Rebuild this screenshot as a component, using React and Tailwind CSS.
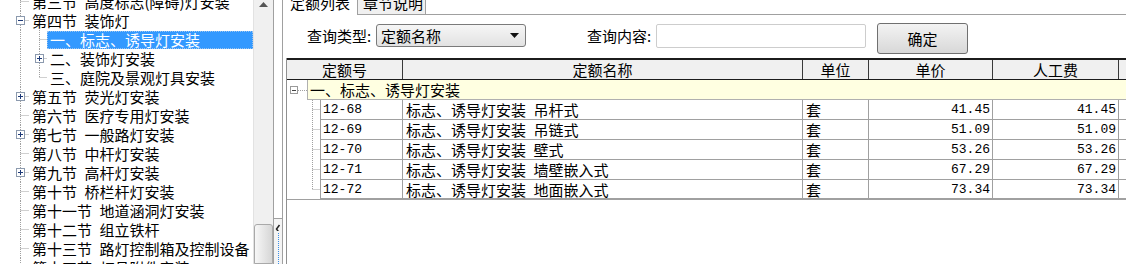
import React from 'react';

const CJK = "font-['Noto_Sans_CJK_SC',sans-serif]";
const MONO = "font-['Liberation_Mono','Noto_Sans_CJK_SC',monospace]";

const TREE = [
  { t: '第三节\u2002高度标志(障碍)灯安装', lv: 0, k: 'leaf' },
  { t: '第四节\u2002装饰灯', lv: 0, k: 'minus' },
  { t: '一、标志、诱导灯安装', lv: 1, k: 'leaf', sel: true },
  { t: '二、装饰灯安装', lv: 1, k: 'plus' },
  { t: '三、庭院及景观灯具安装', lv: 1, k: 'leaf', last: true },
  { t: '第五节\u2002荧光灯安装', lv: 0, k: 'plus' },
  { t: '第六节\u2002医疗专用灯安装', lv: 0, k: 'leaf' },
  { t: '第七节\u2002一般路灯安装', lv: 0, k: 'plus' },
  { t: '第八节\u2002中杆灯安装', lv: 0, k: 'leaf' },
  { t: '第九节\u2002高杆灯安装', lv: 0, k: 'plus' },
  { t: '第十节\u2002桥栏杆灯安装', lv: 0, k: 'leaf' },
  { t: '第十一节\u2002地道涵洞灯安装', lv: 0, k: 'leaf' },
  { t: '第十二节\u2002组立铁杆', lv: 0, k: 'leaf' },
  { t: '第十三节\u2002路灯控制箱及控制设备', lv: 0, k: 'leaf' },
  { t: '第十四节\u2002灯具附件安装', lv: 0, k: 'leaf' },
];

const ROWS = [
  { code: '12-68', name: '标志、诱导灯安装\u2002吊杆式', price: '41.45' },
  { code: '12-69', name: '标志、诱导灯安装\u2002吊链式', price: '51.09' },
  { code: '12-70', name: '标志、诱导灯安装\u2002壁式', price: '53.26' },
  { code: '12-71', name: '标志、诱导灯安装\u2002墙壁嵌入式', price: '67.29' },
  { code: '12-72', name: '标志、诱导灯安装\u2002地面嵌入式', price: '73.34' },
];

const DOT = { stroke: '#a0a0a0', strokeWidth: 1, strokeDasharray: '1 1' };

// small +/- box of the tree
const ExpandBox = ({ x, y, size = 8, minus }) => (
  <g>
    <rect x={x + 0.5} y={y + 0.5} width={size} height={size} fill="#fff" stroke="#8c9aae" />
    <rect x={x + 2} y={y + size / 2} width={size - 3} height={1} fill="#1e3a78" />
    {!minus && <rect x={x + size / 2} y={y + 2} width={1} height={size - 3} fill="#1e3a78" />}
  </g>
);

const Connector = ({ lv, k, last }) => {
  const w = lv === 0 ? 29 : 47;
  const cx = lv === 0 ? 20.5 : 39.5;
  return (
    <svg width={w} height="19" className="shrink-0">
      <line x1="20.5" y1="0" x2="20.5" y2="19" {...DOT} />
      {lv === 1 && <line x1="39.5" y1="0" x2="39.5" y2={last ? 9.5 : 19} {...DOT} />}
      <line x1={cx} y1="9.5" x2={w} y2="9.5" {...DOT} />
      {k !== 'leaf' && <ExpandBox x={cx - 4.5} y={5} minus={k === 'minus'} />}
    </svg>
  );
};

const TreeRow = ({ item }) => (
  <div className="flex h-[19px] items-center">
    <Connector lv={item.lv} k={item.k} last={item.last} />
    <div
      className={
        item.sel
          ? 'flex h-[18px] flex-1 items-center border border-dotted border-[#9cc4ee] bg-[#3399ff] pl-[2px] text-white'
          : 'flex h-[18px] flex-1 items-center pl-[3px] text-black'
      }
    >
      <span className="whitespace-nowrap leading-[18px]">{item.t}</span>
    </div>
  </div>
);

const Scrollbar = () => (
  <div className="flex h-full w-[20px] shrink-0 flex-col border-l border-[#e2e2e2] bg-[#f0f0f0]">
    <div className="flex h-[10px] items-start justify-center pt-[2px]">
      <svg width="9" height="5">
        <polygon points="4.5,0 9,5 0,5" fill="#555" />
      </svg>
    </div>
    <div className="flex-1" />
    <div className="h-[40px] rounded-t-[3px] border border-[#a9a9a9] bg-linear-to-r from-[#f7f7f7] to-[#d6d6d6]" />
  </div>
);

const Splitter = () => (
  <div className="flex h-full w-[10px] shrink-0 flex-col justify-end border-x border-[#a0a0a0] bg-white">
    <div className="flex h-[46px] flex-col items-center border-t border-[#a0a0a0] bg-[#f4f4f4]">
      <svg width="6" height="12" className="mt-[4px]">
        <polyline points="4.5,2 1.5,6 4.5,10" fill="none" stroke="#222" strokeWidth="1.5" />
      </svg>
      <div className="mt-[2px] h-full border-l border-dotted border-[#3a8ee6]" />
    </div>
  </div>
);

const HeadCell = ({ w, children }) => (
  <div className={`${w} flex shrink-0 items-center justify-center border-r border-[#3a3a3a]`}>{children}</div>
);

const Table = () => (
  <div className="ml-[3px] mt-[4px] flex flex-1 flex-col border-l border-[#909090]">
    {/* header */}
    <div className="flex h-[22px] border-y border-t-2 border-[#1c1c1c] bg-[#f0f0f0] leading-[19px]">
      <HeadCell w="w-[116px]">定额号</HeadCell>
      <HeadCell w="w-[400px]">定额名称</HeadCell>
      <HeadCell w="w-[66px]">单位</HeadCell>
      <HeadCell w="w-[124px]">单价</HeadCell>
      <HeadCell w="w-[126px]">人工费</HeadCell>
      <div className="flex-1" />
    </div>

    {/* group row */}
    <div className="flex h-[20px]">
      <svg width="20" height="20" className="shrink-0">
        <rect x="3.5" y="6.5" width="7" height="7" fill="#fff" stroke="#9a9a9a" />
        <rect x="5" y="10" width="4" height="1" fill="#444" />
        <line x1="11" y1="10.5" x2="20" y2="10.5" {...DOT} />
      </svg>
      <div className="flex flex-1 items-center border-b border-l border-[#b0b0b0] bg-[#ffffe1] pl-[2px] leading-[19px]">
        一、标志、诱导灯安装
      </div>
    </div>

    {/* data rows */}
    {ROWS.map((r, i) => {
      const last = i === ROWS.length - 1;
      return (
        <div key={r.code} className={last ? 'flex h-[20px] border-b border-[#a0a0a0]' : 'flex h-[20px]'}>
          <svg width="33" height={last ? 19 : 20} className="shrink-0">
            <line x1="25.5" y1="0" x2="25.5" y2={last ? 9.5 : 20} {...DOT} />
            <line x1="25.5" y1="9.5" x2="33" y2="9.5" {...DOT} />
          </svg>
          <div className="flex flex-1 border-b border-[#a0a0a0] leading-[19px]">
            <div className={`${MONO} flex w-[83px] shrink-0 items-center border-x border-[#a0a0a0] pl-[2px] text-[13px]`}>
              {r.code}
            </div>
            <div className="flex w-[400px] shrink-0 items-center border-r border-[#a0a0a0] pl-[3px]">{r.name}</div>
            <div className="flex w-[66px] shrink-0 items-center border-r border-[#a0a0a0] pl-[3px]">套</div>
            <div className={`${MONO} flex w-[124px] shrink-0 items-center justify-end border-r border-[#a0a0a0] pr-[2px] text-[13px]`}>
              {r.price}
            </div>
            <div className={`${MONO} flex w-[126px] shrink-0 items-center justify-end border-r border-[#a0a0a0] pr-[2px] text-[13px]`}>
              {r.price}
            </div>
            <div className="flex-1" />
          </div>
        </div>
      );
    })}
    <div className="flex-1" />
  </div>
);

export default function App() {
  return (
    <div className={`${CJK} flex h-[264px] w-[1126px] overflow-hidden bg-white text-[15px] text-black`}>
      {/* chapter tree */}
      <div className="h-full w-[253px] shrink-0 overflow-hidden">
        <div className="-mt-[8px]">
          {TREE.map((item) => (
            <TreeRow key={item.t} item={item} />
          ))}
        </div>
      </div>
      <Scrollbar />
      <Splitter />

      {/* quota list */}
      <div className="flex h-full min-w-0 flex-1 flex-col">
        <div className="flex h-[15px] shrink-0">
          <div className="w-[74px] shrink-0 pl-[7px]">
            <span className="block -translate-y-[5px] leading-[15px]">定额列表</span>
          </div>
          <div className="w-[69px] shrink-0 border border-t-0 border-[#a0a0a0] bg-[#f0f0f0] pl-[5px]">
            <span className="block -translate-y-[5px] leading-[15px]">章节说明</span>
          </div>
          <div className="flex-1 border-b border-[#a0a0a0]" />
        </div>

        <div className="mt-[8px] flex h-[31px] shrink-0 items-start pl-[24px]">
          <div className="mt-[1px] h-[24px] w-[69px] shrink-0 leading-[24px]">查询类型:</div>
          <div className="mt-[1px] flex h-[23px] w-[150px] shrink-0 items-center justify-between rounded-[3px] border border-[#7a7a7a] bg-linear-to-b from-[#f6f6f6] to-[#e2e2e2] pl-[4px] pr-[6px]">
            <span className="leading-[20px]">定额名称</span>
            <svg width="9" height="5">
              <polygon points="0,0 9,0 4.5,5" fill="#111" />
            </svg>
          </div>
          <div className="ml-[61px] mt-[1px] h-[24px] w-[69px] shrink-0 leading-[24px]">查询内容:</div>
          <div className="mt-[1px] h-[24px] w-[210px] shrink-0 rounded-[2px] border border-[#cdcdcd] bg-white" />
          <button className="ml-[11px] flex h-[31px] w-[91px] shrink-0 items-center justify-center rounded-[3px] border border-[#707070] bg-linear-to-b from-[#f3f3f3] to-[#d8d8d8] leading-[20px]">
            确定
          </button>
        </div>

        <Table />
      </div>
    </div>
  );
}
